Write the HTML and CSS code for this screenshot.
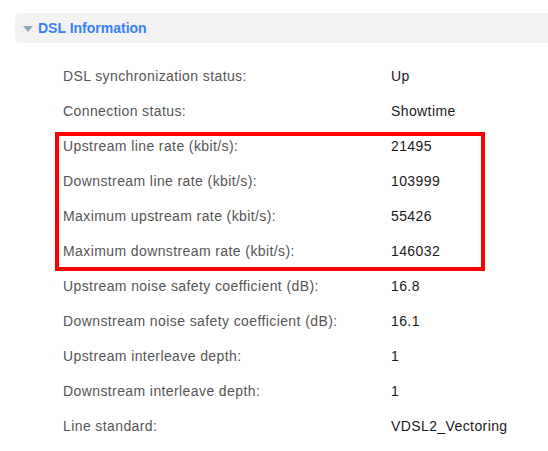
FILE: index.html
```html
<!DOCTYPE html>
<html lang="en">
<head>
    <meta charset="UTF-8">
    <meta name="viewport" content="width=device-width, initial-scale=1.0">
    <title>DSL Information</title>
    <link rel="stylesheet" href="styles.css">
</head>
<body>
    <section class="panel">
        <header class="panel-head">
            <span class="caret"></span>
            <h2>DSL Information</h2>
        </header>
        <div class="info">
            <div class="row"><span class="lbl">DSL synchronization status:</span><span class="val">Up</span></div>
            <div class="row"><span class="lbl">Connection status:</span><span class="val">Showtime</span></div>
            <!--rates block, boxed in red-->
            <div class="mark">
                <div class="row"><span class="lbl">Upstream line rate (kbit/s):</span><span class="val">21495</span></div>
                <div class="row"><span class="lbl">Downstream line rate (kbit/s):</span><span class="val">103999</span></div>
                <div class="row"><span class="lbl">Maximum upstream rate (kbit/s):</span><span class="val">55426</span></div>
                <div class="row"><span class="lbl">Maximum downstream rate (kbit/s):</span><span class="val">146032</span></div>
            </div>
            <div class="row"><span class="lbl">Upstream noise safety coefficient (dB):</span><span class="val">16.8</span></div>
            <div class="row"><span class="lbl">Downstream noise safety coefficient (dB):</span><span class="val">16.1</span></div>
            <div class="row"><span class="lbl">Upstream interleave depth:</span><span class="val">1</span></div>
            <div class="row"><span class="lbl">Downstream interleave depth:</span><span class="val">1</span></div>
            <div class="row"><span class="lbl">Line standard:</span><span class="val">VDSL2_Vectoring</span></div>
        </div>
    </section>
</body>
</html>
```

FILE: styles.css
```css
*{
    margin: 0;
    box-sizing: border-box;
}
body{
    background: #ffffff;
    font-family: "Liberation Sans", Arial, sans-serif;
    font-size: 14px;
    letter-spacing: 0.4px;
    overflow: hidden;
}
.panel{
    padding-top: 13px;
    padding-left: 15px;
}
.panel-head{
    display: flex;
    align-items: center;
    height: 30px;
    background-color: #f2f2f2;
    border-radius: 5px 0 0 5px;
    padding-left: 8px;
}
.caret{
    width: 0;
    height: 0;
    border-left: 5px solid transparent;
    border-right: 5px solid transparent;
    border-top: 6px solid #8faab6;
    margin-right: 5px;
    margin-top: 2px;
}
h2{
    font-size: 14px;
    font-weight: bold;
    letter-spacing: 0;
    color: #3481f4;
}
.info{
    padding-top: 15px;
    padding-left: 48px;
}
.row{
    display: grid;
    grid-template-columns: 328px 1fr;
    align-items: center;
    height: 35.1px;
}
.lbl{
    color: #555555;
}
.val{
    color: #1a1a1a;
}
.mark{
    position: relative;
}
.mark::after{
    content: "";
    position: absolute;
    left: -8px;
    top: 4px;
    width: 422px;
    bottom: -2px;
    border: 4px solid #ff0000;
}
```
